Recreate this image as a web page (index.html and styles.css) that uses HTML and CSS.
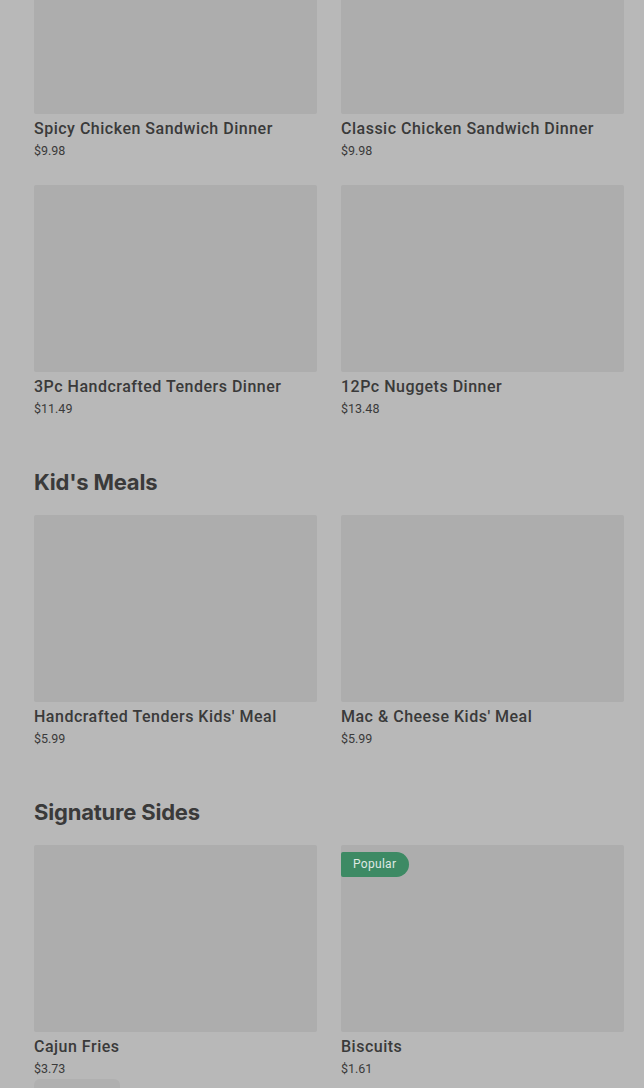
FILE: index.html
```html
<!DOCTYPE html>
<html lang="en">
<head>
    <meta charset="UTF-8">
    <meta name="viewport" content="width=device-width, initial-scale=1.0">
    <title>Menu</title>
    <link rel="stylesheet" href="styles.css">
</head>
<body>
    <div class="menu">
        <div class="grid first">
            <div class="card">
                <div class="thumb"></div>
                <p class="name">Spicy Chicken Sandwich Dinner</p>
                <p class="price">$9.98</p>
            </div>
            <div class="card">
                <div class="thumb"></div>
                <p class="name">Classic Chicken Sandwich Dinner</p>
                <p class="price">$9.98</p>
            </div>
            <div class="card">
                <div class="thumb"></div>
                <p class="name">3Pc Handcrafted Tenders Dinner</p>
                <p class="price">$11.49</p>
            </div>
            <div class="card">
                <div class="thumb"></div>
                <p class="name">12Pc Nuggets Dinner</p>
                <p class="price">$13.48</p>
            </div>
        </div>

        <h2 class="section-title">Kid's Meals</h2>
        <div class="grid">
            <div class="card">
                <div class="thumb"></div>
                <p class="name">Handcrafted Tenders Kids' Meal</p>
                <p class="price">$5.99</p>
            </div>
            <div class="card">
                <div class="thumb"></div>
                <p class="name">Mac &amp; Cheese Kids' Meal</p>
                <p class="price">$5.99</p>
            </div>
        </div>

        <h2 class="section-title">Signature Sides</h2>
        <div class="grid">
            <div class="card">
                <div class="thumb"></div>
                <p class="name">Cajun Fries</p>
                <p class="price">$3.73</p>
                <div class="pill"></div>
            </div>
            <div class="card">
                <div class="thumb">
                    <span class="badge">Popular</span>
                </div>
                <p class="name">Biscuits</p>
                <p class="price">$1.61</p>
            </div>
        </div>
    </div>
</body>
</html>
```

FILE: styles.css
```css
body {
    margin: 0;
    background-color: #b8b8b8;
    font-family: Roboto, "Liberation Sans", sans-serif;
    color: #3a3a3a;
    overflow: hidden;
}
.menu {
    padding-left: 34px;
    margin-top: -73px;
}
.grid {
    display: grid;
    grid-template-columns: 283px 283px;
    column-gap: 24px;
    row-gap: 26px;
}
.card {
    position: relative;
}
.thumb {
    position: relative;
    height: 187px;
    background-color: #adadad;
    border-radius: 2px;
}
.name {
    margin: 5px 0 0;
    font-size: 16px;
    line-height: 20px;
    font-weight: 500;
    letter-spacing: 0.5px;
    white-space: nowrap;
}
.price {
    margin: 4px 0 0;
    font-size: 12.5px;
    line-height: 16px;
}
.section-title {
    margin: 51px 0 19px;
    font-family: Inter, "Liberation Sans", sans-serif;
    font-size: 22px;
    line-height: 28px;
    font-weight: 700;
    letter-spacing: -0.2px;
    color: #3a3a3a;
}
.badge {
    position: absolute;
    top: 7px;
    left: 0;
    background-color: #3d8a64;
    color: #dfe8e3;
    font-size: 12px;
    line-height: 25px;
    letter-spacing: 0.3px;
    padding: 0 13px 0 12px;
    border-radius: 2px 13px 13px 2px;
}
.pill {
    margin-top: 2px;
    width: 86px;
    height: 20px;
    background-color: #b0b0b0;
    border-radius: 6px 6px 0 0;
}
```
